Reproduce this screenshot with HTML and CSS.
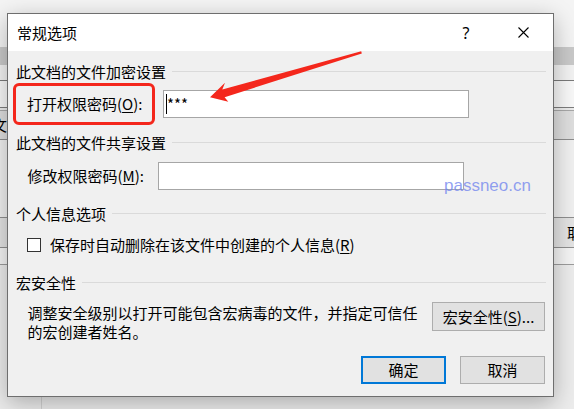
FILE: index.html
```html
<!DOCTYPE html>
<html lang="zh-CN">
<head>
<meta charset="utf-8">
<title>常规选项</title>
<link rel="stylesheet" href="styles.css">
</head>
<body>
<div class="screen">
  <!-- document window behind the dialog -->
  <div class="backdrop">
    <div class="bd-top"></div>
    <div class="bd-tabs"></div>
    <div class="bd-ribbon-head"></div>
    <div class="bd-ribbon"></div>
    <div class="bd-gap"></div>
    <div class="bd-group"><span class="bd-glyph">文</span></div>
    <div class="bd-pane"></div>
    <div class="bd-group2"><span class="bd-glyph bd-glyph-right">取</span></div>
    <div class="bd-pane2"></div>
    <div class="bd-desk"><div class="bd-rule"></div></div>
  </div>

  <section class="dialog">
    <header class="titlebar">
      <span class="title">常规选项</span>
      <span class="tb-btn help">?</span>
      <span class="tb-btn">
        <svg class="close-icon" width="11" height="11" viewBox="0 0 11 11">
          <path d="M0.5 0.5 L10.5 10.5 M10.5 0.5 L0.5 10.5" stroke="#000" stroke-width="1.1" fill="none"/>
        </svg>
      </span>
    </header>

    <div class="content">
      <div class="group-head"><span>此文档的文件加密设置</span></div>
      <div class="field-row row-open">
        <label class="callout">打开权限密码(<u>O</u>):</label>
        <div class="textbox textbox-open"><span class="caret"></span><span class="mask">***</span></div>
      </div>

      <div class="group-head head-share"><span>此文档的文件共享设置</span></div>
      <div class="field-row row-modify">
        <label class="field-label">修改权限密码(<u>M</u>):</label>
        <div class="textbox"></div>
      </div>

      <div class="group-head head-privacy"><span>个人信息选项</span></div>
      <div class="check-row">
        <span class="checkbox"></span>
        <span>保存时自动删除在该文件中创建的个人信息(<u>R</u>)</span>
      </div>

      <div class="group-head head-macro"><span>宏安全性</span></div>
      <div class="macro-row">
        <p class="macro-text">调整安全级别以打开可能包含宏病毒的文件，并指定可信任<br>的宏创建者姓名。</p>
        <button class="btn btn-macro">宏安全性(<u>S</u>)...</button>
      </div>

      <div class="actions">
        <button class="btn btn-default">确定</button>
        <button class="btn">取消</button>
      </div>
    </div>
  </section>

  <span class="watermark">passneo.cn</span>

  <svg class="pointer" width="574" height="409" viewBox="0 0 574 409">
    <polygon fill="#f4271c" points="210,97.3 225,82.7 222.3,89.5 361.2,51.3 361.8,53.6 224.6,97.2 228.3,101.7"/>
  </svg>
</div>
</body>
</html>
```

FILE: styles.css
```css
* {
  box-sizing: border-box;
  margin: 0;
  padding: 0;
}

html,
body {
  width: 574px;
  height: 409px;
  overflow: hidden;
}

body {
  font-family: "Noto Sans CJK SC", "Microsoft YaHei", sans-serif;
  font-size: 15px;
  color: #000;
  background: #ececec;
}

u {
  text-decoration: underline;
  text-underline-offset: 2px;
  text-decoration-thickness: 1px;
}

.screen {
  position: relative;
  width: 574px;
  height: 409px;
  overflow: hidden;
}

/* ---------- window behind ---------- */
.backdrop {
  display: flex;
  flex-direction: column;
  height: 100%;
}

.bd-top {
  height: 47px;
  background: #f4f4f4;
}

.bd-tabs {
  height: 18px;
  background: #c9c9c9;
}

.bd-ribbon-head {
  height: 16px;
  background: #f2f2f2;
  border-bottom: 1px solid #7a7a7a;
}

.bd-ribbon {
  height: 27px;
  background: #f8f8f8;
  border-bottom: 1px solid #7d7d7d;
}

.bd-gap {
  height: 3px;
  background: #ececec;
  border-bottom: 1px solid #a8a8a8;
}

.bd-group {
  height: 29px;
  background: #dedede;
  border-bottom: 1px solid #8c8c8c;
  display: flex;
  align-items: center;
  overflow: hidden;
}

.bd-glyph {
  margin-left: -8px;
  line-height: 20px;
  font-size: 15px;
}

.bd-glyph-right {
  margin-left: 567px;
}

.bd-pane {
  height: 78px;
  background: #f0f0f0;
  border-bottom: 1px solid #8f8f8f;
}

.bd-group2 {
  height: 30px;
  background: #e3e3e3;
  border-bottom: 1px solid #8f8f8f;
  display: flex;
  align-items: center;
  overflow: hidden;
}

.bd-pane2 {
  height: 17px;
  background: #f4f4f4;
  border-bottom: 1px solid #9c9c9c;
}

.bd-desk {
  flex: 1;
  background: #ececec;
  display: flex;
}

.bd-rule {
  width: 1px;
  margin-left: 41px;
  background: #d2d2d2;
}

/* ---------- dialog ---------- */
.dialog {
  position: absolute;
  left: 7px;
  top: 13px;
  width: 547px;
  height: 384px;
  border: 1px solid #6e6e6e;
  background: #f0f0f0;
  box-shadow: 0 6px 22px rgba(0, 0, 0, 0.28);
  display: flex;
  flex-direction: column;
  overflow: hidden;
}

.titlebar {
  height: 37px;
  flex: none;
  background: #fff;
  display: flex;
  align-items: center;
  padding: 0 7px 0 9px;
}

.title {
  flex: 1;
  line-height: 20px;
}

.tb-btn {
  width: 46px;
  height: 37px;
  display: flex;
  align-items: center;
  justify-content: center;
}

.help {
  font-family: "Noto Sans", "Liberation Sans", sans-serif;
  font-size: 16px;
  margin-right: 11px;
}

.close-icon {
  display: block;
}

.content {
  flex: 1;
  padding: 10px 7px 0 8px;
  display: flex;
  flex-direction: column;
}

.group-head {
  height: 21px;
  line-height: 21px;
  display: flex;
  align-items: center;
  white-space: nowrap;
}

.group-head::after {
  content: "";
  flex: 1;
  height: 1px;
  margin-left: 6px;
  background: #dadada;
}

.head-share {
  margin-top: 7px;
}

.head-privacy {
  margin-top: 13px;
}

.head-macro {
  margin-top: 17px;
}

.field-row {
  display: flex;
  align-items: center;
}

.row-open {
  margin-top: 1px;
  height: 42px;
}

.callout {
  width: 142px;
  height: 42px;
  margin-left: -3px;
  border: 3px solid #f4271c;
  border-radius: 6px;
  padding-left: 11px;
  display: flex;
  align-items: center;
  line-height: 20px;
  white-space: nowrap;
}

.textbox {
  width: 306px;
  height: 28px;
  background: #fff;
  border: 1px solid #a6a6a6;
  display: flex;
  align-items: center;
  padding-left: 2px;
}

.textbox-open {
  margin-left: 8px;
}

.caret {
  width: 1px;
  height: 20px;
  background: #000;
}

.mask {
  font-size: 15px;
  letter-spacing: 0;
  line-height: 20px;
  margin-top: -1px;
}

.row-modify {
  margin-top: 9px;
  height: 28px;
}

.field-label {
  width: 142px;
  padding-left: 11.5px;
  line-height: 20px;
  white-space: nowrap;
}

.check-row {
  margin-top: 11px;
  height: 20px;
  padding-left: 11px;
  display: flex;
  align-items: center;
  gap: 9px;
  line-height: 20px;
  white-space: nowrap;
}

.checkbox {
  width: 14px;
  height: 14px;
  border: 1px solid #333;
  background: #fff;
}

.macro-row {
  margin-top: 9px;
  display: flex;
  align-items: flex-start;
}

.macro-text {
  flex: 1;
  margin-top: 1px;
  padding-left: 11.5px;
  line-height: 19px;
  white-space: nowrap;
}

.btn {
  font: inherit;
  color: #000;
  background: #e1e1e1;
  border: 1px solid #adadad;
  height: 28px;
  width: 85px;
  line-height: 20px;
  display: flex;
  align-items: center;
  justify-content: center;
}

.btn-macro {
  width: 113px;
  height: 29px;
  margin-right: 1px;
}

.actions {
  margin-top: 15px;
  margin-right: 1px;
  display: flex;
  justify-content: flex-end;
  gap: 14px;
}

.btn-default {
  border: 2px solid #0078d7;
}

/* ---------- overlays ---------- */
.watermark {
  position: absolute;
  left: 444px;
  top: 176px;
  font-family: "Liberation Sans", Arial, sans-serif;
  font-size: 17px;
  line-height: 20px;
  color: rgba(110, 130, 238, 0.75);
}

.pointer {
  position: absolute;
  left: 0;
  top: 0;
  pointer-events: none;
}
```
